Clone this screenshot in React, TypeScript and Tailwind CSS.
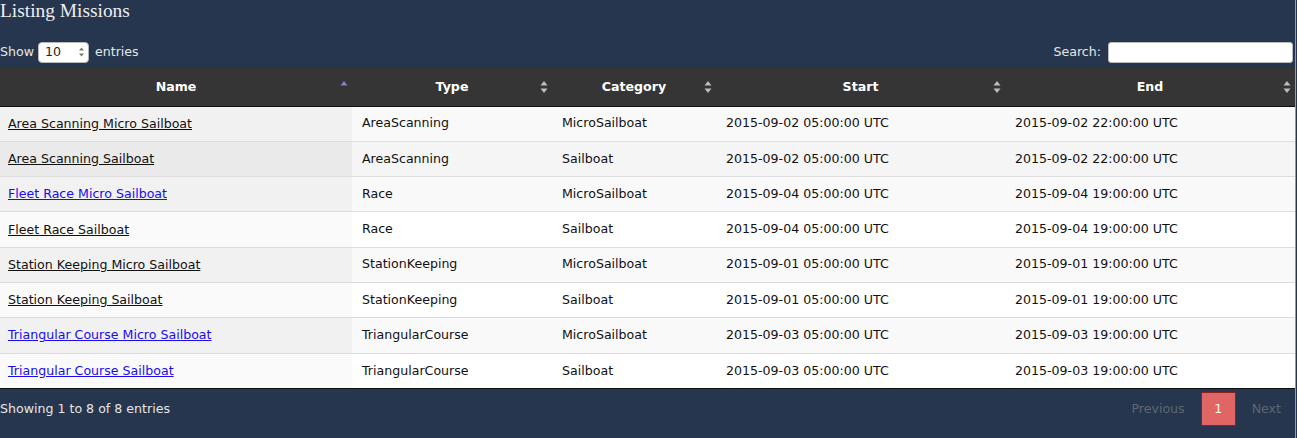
import React from 'react';

type Mission = {
  name: string;
  type: string;
  category: string;
  start: string;
  end: string;
  visited: boolean;
};

const missions: Mission[] = [
  { name: 'Area Scanning Micro Sailboat', type: 'AreaScanning', category: 'MicroSailboat', start: '2015-09-02 05:00:00 UTC', end: '2015-09-02 22:00:00 UTC', visited: true },
  { name: 'Area Scanning Sailboat', type: 'AreaScanning', category: 'Sailboat', start: '2015-09-02 05:00:00 UTC', end: '2015-09-02 22:00:00 UTC', visited: true },
  { name: 'Fleet Race Micro Sailboat', type: 'Race', category: 'MicroSailboat', start: '2015-09-04 05:00:00 UTC', end: '2015-09-04 19:00:00 UTC', visited: false },
  { name: 'Fleet Race Sailboat', type: 'Race', category: 'Sailboat', start: '2015-09-04 05:00:00 UTC', end: '2015-09-04 19:00:00 UTC', visited: true },
  { name: 'Station Keeping Micro Sailboat', type: 'StationKeeping', category: 'MicroSailboat', start: '2015-09-01 05:00:00 UTC', end: '2015-09-01 19:00:00 UTC', visited: true },
  { name: 'Station Keeping Sailboat', type: 'StationKeeping', category: 'Sailboat', start: '2015-09-01 05:00:00 UTC', end: '2015-09-01 19:00:00 UTC', visited: true },
  { name: 'Triangular Course Micro Sailboat', type: 'TriangularCourse', category: 'MicroSailboat', start: '2015-09-03 05:00:00 UTC', end: '2015-09-03 19:00:00 UTC', visited: false },
  { name: 'Triangular Course Sailboat', type: 'TriangularCourse', category: 'Sailboat', start: '2015-09-03 05:00:00 UTC', end: '2015-09-03 19:00:00 UTC', visited: false },
];

// both arrows (unsorted column) or just the up arrow in blue (sorted asc)
const SortIcon = ({ active }: { active?: boolean }) =>
  active ? (
    <svg width="8" height="12" viewBox="0 0 8 12" className="absolute right-[4px] top-[12px]">
      <path d="M0.5 5.5 L4 1 L7.5 5.5 Z" fill="#7f7fd5" />
    </svg>
  ) : (
    <svg width="8" height="14" viewBox="0 0 8 14" className="absolute right-[4px] top-[12px]">
      <path d="M0.5 5.5 L4 1 L7.5 5.5 Z" fill="#bdbdbd" />
      <path d="M0.5 8.5 L4 13 L7.5 8.5 Z" fill="#bdbdbd" />
    </svg>
  );

const columns = [
  { label: 'Name', w: 'w-[352px]', active: true },
  { label: 'Type', w: 'w-[200px]' },
  { label: 'Category', w: 'w-[164px]' },
  { label: 'Start', w: 'w-[289px]' },
  { label: 'End', w: 'w-[290px]' },
];

export default function App() {
  return (
    <div className="h-[438px] w-full bg-[#25364e] font-['DejaVu_Sans',sans-serif] text-[12.6px] text-[#e6e6e6] overflow-hidden">
      <div className="w-[1296px] h-full border-r border-[#9a9a9a]">
        <h1 className="font-['Liberation_Serif',serif] text-[19.4px] leading-[22px] text-[#eeeeee]">
          Listing Missions
        </h1>

        <div className="flex items-center justify-between mt-[19px] h-[22px] pr-[2px]">
          <div className="flex items-center">
            <span>Show</span>
            <div className="ml-[4px] mr-[6px] flex h-[21px] w-[51px] items-center justify-between rounded-[4px] border border-[#b8b8b8] bg-white pl-[6px] pr-[3px] text-[#222]">
              <span>10</span>
              <svg width="7" height="12" viewBox="0 0 7 12">
                <path d="M1 4.5 L3.5 1.5 L6 4.5 Z" fill="#777" />
                <path d="M1 7.5 L3.5 10.5 L6 7.5 Z" fill="#777" />
              </svg>
            </div>
            <span>entries</span>
          </div>
          <div className="flex items-center">
            <span>Search:</span>
            <div className="ml-[7px] h-[21px] w-[185px] rounded-[3px] border border-[#bbbbbb] bg-white" />
          </div>
        </div>

        <table className="mt-[5px] w-[1295px] border-collapse table-fixed">
          <thead>
            <tr className="bg-[#353535] text-white">
              {columns.map((c) => (
                <th
                  key={c.label}
                  className={`${c.w} relative h-[38px] border-b border-[#111] px-[10px] text-center font-bold leading-[18px]`}
                >
                  {c.label}
                  <SortIcon active={c.active} />
                </th>
              ))}
            </tr>
          </thead>
          <tbody className="text-[#111]">
            {missions.map((m, i) => {
              const odd = i % 2 === 0;
              const hover = i === 1;
              const rowBg = hover ? 'bg-[#f5f5f5]' : odd ? 'bg-[#f9f9f9]' : 'bg-white';
              const nameBg = hover ? 'bg-[#eaeaea]' : odd ? 'bg-[#f1f1f1]' : 'bg-[#fafafa]';
              return (
                <tr key={m.name} className={`${rowBg} ${i > 0 ? 'border-t border-[#dddddd]' : ''}`}>
                  <td className={`${nameBg} h-[35.3px] px-[8px] leading-[18px]`}>
                    <a className={`underline ${m.visited ? 'text-[#111]' : 'text-[#1a0dee]'}`}>{m.name}</a>
                  </td>
                  <td className="px-[10px]">{m.type}</td>
                  <td className="px-[10px]">{m.category}</td>
                  <td className="px-[10px]">{m.start}</td>
                  <td className="px-[10px]">{m.end}</td>
                </tr>
              );
            })}
          </tbody>
        </table>

        <div className="flex items-center justify-between border-t border-[#111] w-[1295px] pt-[3px]">
          <span>Showing 1 to 8 of 8 entries</span>
          <div className="flex items-center text-[#5f6670]">
            <span className="px-[14px]">Previous</span>
            <span className="mx-[2px] flex h-[34px] w-[35px] items-center justify-center border border-[#8e1f1f] bg-[#e06666] text-[#fff4e0]">
              1
            </span>
            <span className="px-[14px]">Next</span>
          </div>
        </div>
      </div>
    </div>
  );
}
